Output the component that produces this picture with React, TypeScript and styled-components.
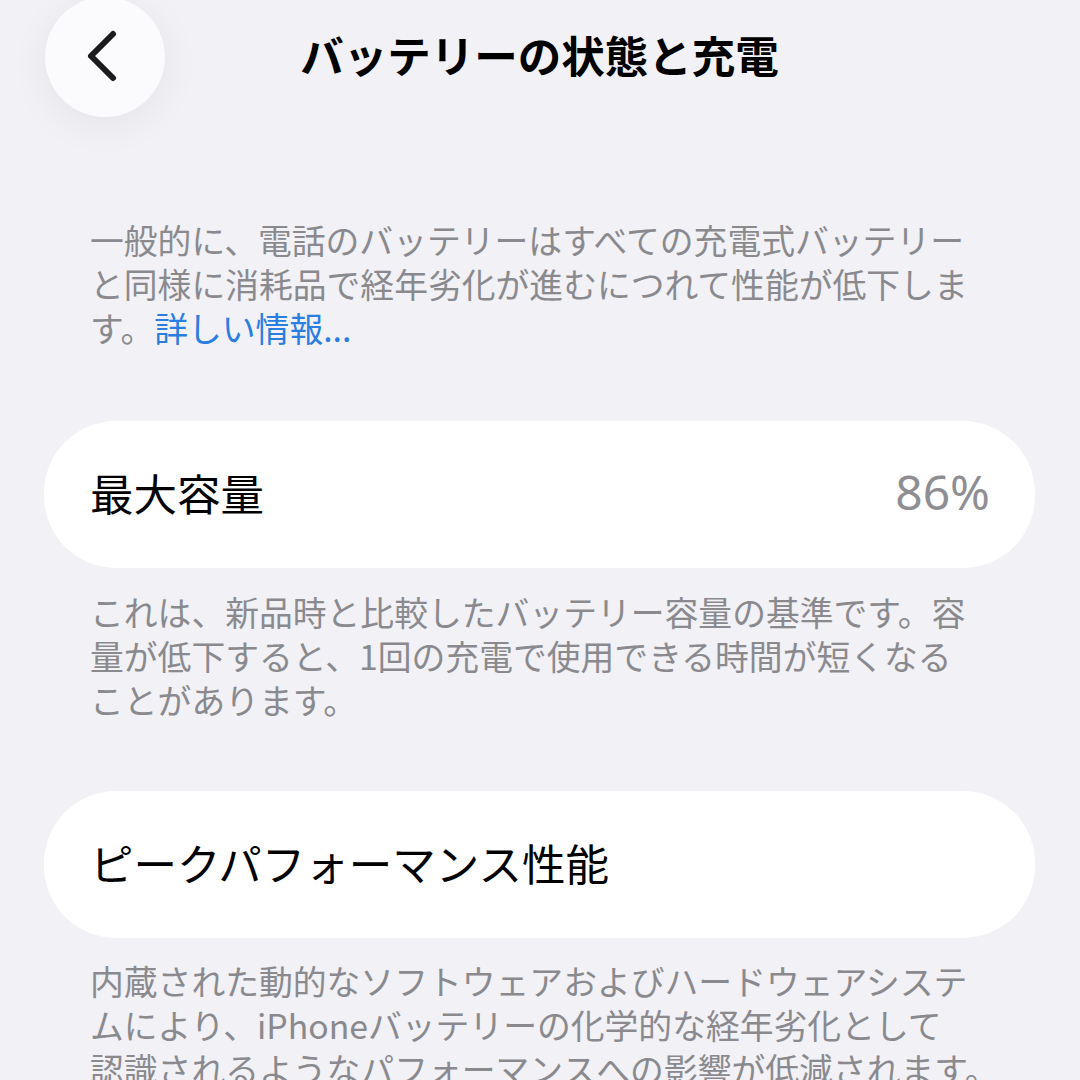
import React from "react";
import styled, { createGlobalStyle } from "styled-components";

const Global = createGlobalStyle`
  html, body { margin: 0; padding: 0; background: #f1f1f6; }
  body { font-family: "Noto Sans CJK JP", "Noto Sans", sans-serif; -webkit-font-smoothing: antialiased; }
`;

const Page = styled.div`
  width: 1080px;
  height: 1080px;
  overflow: hidden;
  background: #f1f1f6;
  box-sizing: border-box;
  padding: 0 45px 0 44px;
`;

const Header = styled.div`
  position: relative;
  height: 114px;
  display: flex;
  align-items: center;
  justify-content: center;
`;

const BackButton = styled.button`
  position: absolute;
  left: 1px;
  top: -3px;
  width: 120px;
  height: 120px;
  border-radius: 50%;
  border: none;
  background: #fbfbfd;
  box-shadow: 0 8px 40px rgba(0, 0, 0, 0.06);
  display: flex;
  align-items: center;
  justify-content: center;
  padding: 0;
`;

const Title = styled.h1`
  margin: -6px 0 0;
  font-size: 43.5px;
  font-weight: 700;
  color: #000;
  letter-spacing: 0;
`;

const Note = styled.p<{ $top: number; $bottom: number }>`
  margin: ${(p) => p.$top}px 0 ${(p) => p.$bottom}px;
  padding-left: 46px;
  font-size: 33.8px;
  line-height: 44px;
  color: #8a8a8e;
  white-space: nowrap;
`;

const Link = styled.span`
  color: #2a7de1;
`;

const Card = styled.div`
  height: 147px;
  border-radius: 72px;
  background: #ffffff;
  display: flex;
  align-items: center;
  justify-content: space-between;
  padding: 0 45px 0 46px;
  box-sizing: border-box;
`;

const Label = styled.span`
  font-size: 43.5px;
  color: #000;
  margin-top: -4px;
`;

const Value = styled.span`
  font-size: 48px;
  color: #8e8e93;
  font-family: "Noto Sans", "Noto Sans CJK JP", sans-serif;
  margin-top: -6px;
`;

export default function App() {
  return (
    <>
      <Global />
      <Page>
        <Header>
          <BackButton aria-label="戻る">
            <svg width="40" height="56" viewBox="0 0 40 56">
              <path
                d="M28 5 L6 27 L28 49"
                fill="none"
                stroke="#1c1c1e"
                strokeWidth="6"
                strokeLinecap="round"
                strokeLinejoin="round"
              />
            </svg>
          </BackButton>
          <Title>バッテリーの状態と充電</Title>
        </Header>
        <Note $top={104} $bottom={71}>
          一般的に、電話のバッテリーはすべての充電式バッテリー
          <br />
          と同様に消耗品で経年劣化が進むにつれて性能が低下しま
          <br />
          す。<Link>詳しい情報...</Link>
        </Note>
        <Card>
          <Label>最大容量</Label>
          <Value>86%</Value>
        </Card>
        <Note $top={22} $bottom={69}>
          これは、新品時と比較したバッテリー容量の基準です。容
          <br />
          量が低下すると、1回の充電で使用できる時間が短くなる
          <br />
          ことがあります。
        </Note>
        <Card>
          <Label>ピークパフォーマンス性能</Label>
        </Card>
        <Note $top={21} $bottom={0}>
          内蔵された動的なソフトウェアおよびハードウェアシステ
          <br />
          ムにより、iPhoneバッテリーの化学的な経年劣化として
          <br />
          認識されるようなパフォーマンスへの影響が低減されます。
        </Note>
      </Page>
    </>
  );
}
